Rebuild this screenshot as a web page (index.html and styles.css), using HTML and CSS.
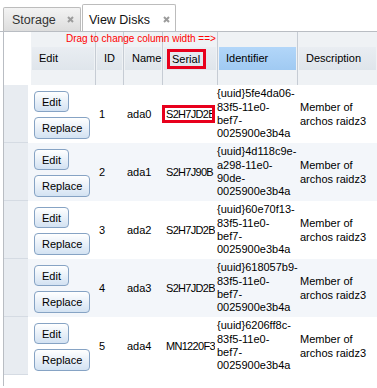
FILE: index.html
```html
<!DOCTYPE html>
<html>

<head>
  <meta charset="UTF-8">
  <title>View Disks</title>
  <link rel="stylesheet" href="styles.css">
</head>

<body>
  <div class="tabs">
    <div class="tab">
      <span>Storage</span>
      <svg class="close" width="7" height="7" viewBox="0 0 7 7"><path d="M1 1L6 6M6 1L1 6" /></svg>
    </div>
    <div class="tab active">
      <span>View Disks</span>
      <svg class="close" width="7" height="7" viewBox="0 0 7 7"><path d="M1 1L6 6M6 1L1 6" /></svg>
    </div>
  </div>

  <div class="pane">
    <div class="head">
      <div class="hint">Drag to change column width ==&gt;</div>
      <div class="gutter-head"></div>
      <div class="hcell w-edit"><div class="label">Edit</div></div>
      <div class="hcell w-id"><div class="label">ID</div></div>
      <div class="hcell w-name"><div class="label">Name</div></div>
      <div class="hcell w-serial"><div class="label"><span class="mark-head">Serial</span></div></div>
      <div class="hcell w-ident"><div class="label sorted">Identifier</div></div>
      <div class="hcell w-desc"><div class="label">Description</div></div>
    </div>

    <div class="row">
      <div class="gutter"></div>
      <div class="cell c-edit"><button class="btn">Edit</button><button class="btn">Replace</button></div>
      <div class="cell c-id">1</div>
      <div class="cell c-name">ada0</div>
      <div class="cell c-serial"><span class="mark">S2H7JD2B</span></div>
      <div class="cell c-ident">{uuid}5fe4da06-<br>83f5-11e0-<br>bef7-<br>0025900e3b4a</div>
      <div class="cell c-desc">Member of<br>archos raidz3</div>
    </div>
    <div class="row odd">
      <div class="gutter"></div>
      <div class="cell c-edit"><button class="btn">Edit</button><button class="btn">Replace</button></div>
      <div class="cell c-id">2</div>
      <div class="cell c-name">ada1</div>
      <div class="cell c-serial">S2H7J90B</div>
      <div class="cell c-ident">{uuid}4d118c9e-<br>a298-11e0-<br>90de-<br>0025900e3b4a</div>
      <div class="cell c-desc">Member of<br>archos raidz3</div>
    </div>
    <div class="row">
      <div class="gutter"></div>
      <div class="cell c-edit"><button class="btn">Edit</button><button class="btn">Replace</button></div>
      <div class="cell c-id">3</div>
      <div class="cell c-name">ada2</div>
      <div class="cell c-serial">S2H7JD2B</div>
      <div class="cell c-ident">{uuid}60e70f13-<br>83f5-11e0-<br>bef7-<br>0025900e3b4a</div>
      <div class="cell c-desc">Member of<br>archos raidz3</div>
    </div>
    <div class="row odd">
      <div class="gutter"></div>
      <div class="cell c-edit"><button class="btn">Edit</button><button class="btn">Replace</button></div>
      <div class="cell c-id">4</div>
      <div class="cell c-name">ada3</div>
      <div class="cell c-serial">S2H7JD2B</div>
      <div class="cell c-ident">{uuid}618057b9-<br>83f5-11e0-<br>bef7-<br>0025900e3b4a</div>
      <div class="cell c-desc">Member of<br>archos raidz3</div>
    </div>
    <div class="row">
      <div class="gutter"></div>
      <div class="cell c-edit"><button class="btn">Edit</button><button class="btn">Replace</button></div>
      <div class="cell c-id">5</div>
      <div class="cell c-name">ada4</div>
      <div class="cell c-serial">MN1220F3</div>
      <div class="cell c-ident">{uuid}6206ff8c-<br>83f5-11e0-<br>bef7-<br>0025900e3b4a</div>
      <div class="cell c-desc">Member of<br>archos raidz3</div>
    </div>
  </div>
</body>

</html>
```

FILE: styles.css
```css
html,
body {
  margin: 0;
  overflow: hidden;
  background-color: #fff;
}

body {
  font-family: "Liberation Sans", Arial, sans-serif;
  font-size: 11px;
  color: #000;
  width: 377px;
  height: 388px;
}

/* tab strip */
.tabs {
  display: flex;
  align-items: flex-end;
  height: 31px;
  padding-left: 3px;
  border-bottom: 1px solid #b9bdc3;
}

.tab {
  display: flex;
  align-items: center;
  box-sizing: border-box;
  width: 78px;
  height: 24px;
  padding: 0 6px 0 8px;
  border: 1px solid #bcbcbc;
  border-bottom: none;
  border-radius: 2px 2px 0 0;
  background: linear-gradient(#f3f3f3, #dddddd);
  font-size: 12.5px;
  color: #333;
}

.tab.active {
  width: 94px;
  height: 27px;
  margin-left: 1px;
  padding: 3px 5px 0 6px;
  background: #fff;
  color: #111;
}

.close {
  margin-left: auto;
}

.close path {
  stroke: #9c9c9c;
  stroke-width: 2;
  fill: none;
}

/* grid */
.pane {
  border-left: 1px solid #b9bdc3;
  margin-left: 3px;
  padding-bottom: 11px;
}

.head {
  position: relative;
  display: flex;
  height: 53px;
  white-space: nowrap;
}

.hint {
  position: absolute;
  left: 62px;
  top: 1px;
  font-size: 10px;
  color: #f00;
}

.gutter-head {
  flex: none;
  width: 27px;
}

.hcell {
  flex: none;
  box-sizing: border-box;
  padding: 15px 1px 15px 1px;
  border-right: 1px solid #c6ccd4;
  background-color: #eff2f5;
}

.label {
  height: 23px;
  line-height: 23px;
  padding-left: 7px;
  background: linear-gradient(#e9edf2, #dfe5eb);
}

.label.sorted {
  background: linear-gradient(#b2d6f9, #a0caf2);
}

.mark-head {
  display: inline-block;
  vertical-align: middle;
  line-height: 14px;
  margin-left: -4px;
  padding: 0 3px 0 2px;
  border: 3px solid #e8001c;
}

.w-edit { width: 65px; }
.w-id { width: 28px; }
.w-name { width: 39px; }
.w-serial { width: 55px; }
.w-ident { width: 80px; }
.w-desc { width: 79px; border-right: none; }

.row {
  display: flex;
  height: 58px;
  white-space: nowrap;
}

.row.odd {
  background-color: #f3f6fa;
}

.gutter {
  flex: none;
  box-sizing: border-box;
  width: 24px;
  margin-right: 3px;
  background-color: #e8ecf1;
  border-bottom: 1px solid #d5dbe3;
}

.cell {
  flex: none;
  box-sizing: border-box;
  display: flex;
  align-items: center;
  overflow: hidden;
  padding-left: 3px;
}

.c-edit {
  width: 65px;
  flex-direction: column;
  align-items: flex-start;
  padding-top: 6px;
}

.c-id { width: 28px; }
.c-name { width: 38px; }
.c-serial { width: 53px; padding-left: 4px; letter-spacing: -0.7px; }
.c-ident { width: 83px; padding-left: 2px; line-height: 13.4px; }
.c-desc { width: 79px; padding-left: 2px; line-height: 14px; }

.mark {
  display: inline-block;
  flex: none;
  width: 46px;
  height: 12px;
  line-height: 12px;
  margin-left: -4px;
  padding-left: 1px;
  overflow: hidden;
  border: 3px solid #e8001c;
}

.btn {
  display: block;
  height: 21px;
  padding: 0 7px;
  border: 1px solid #86a3c4;
  border-radius: 4px;
  background: linear-gradient(#ffffff, #d3e2f2);
  font-family: "Liberation Sans", Arial, sans-serif;
  font-size: 11px;
  color: #000;
}

.btn + .btn {
  height: 22px;
  margin-top: 5px;
}
```
